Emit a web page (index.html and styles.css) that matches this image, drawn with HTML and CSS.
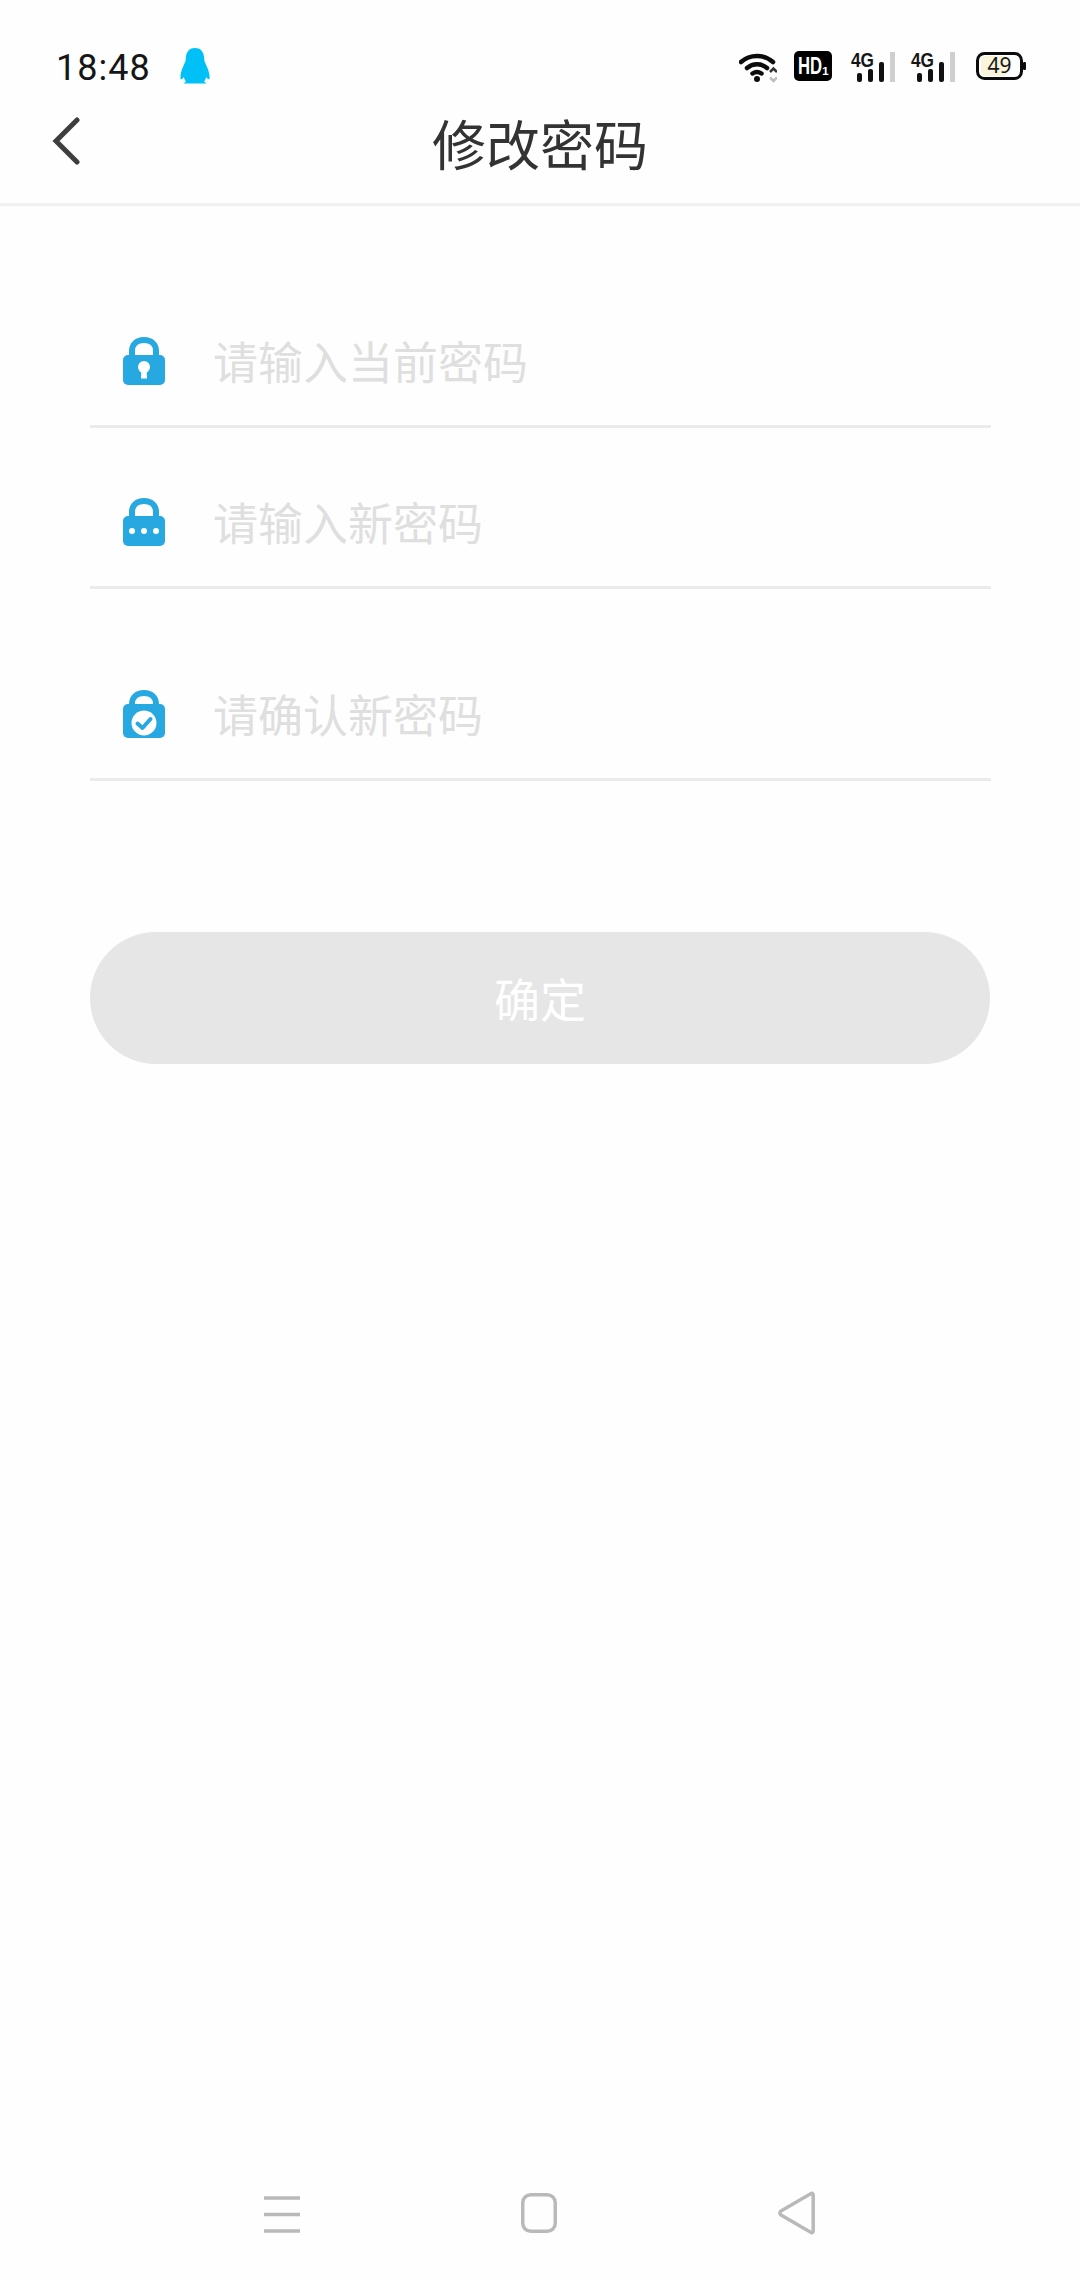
FILE: index.html
```html
<!DOCTYPE html>
<html lang="zh-CN">
<head>
<meta charset="utf-8">
<title>修改密码</title>
<link rel="stylesheet" href="styles.css">
</head>
<body>
<div class="page">
  <header class="status">
    <div class="status-left">
      <span class="time">18:48</span>
      <svg class="qq" viewBox="0 0 30 36"><path d="M15 0C8.500 0 6 5 5.800 10.500C5.700 14 4.500 15 3 19C1.500 22 0 27 0.500 31C2 32 3 30 3.800 29C4.500 31 5 32.500 6 33.500L3.500 35.500H26.500L24 33.500C25 32.500 25.500 31 26.200 29C27 30 28 32 29.500 31C30 27 28.500 22 27 19C25.500 15 24.300 14 24.200 10.500C24 5 21.500 0 15 0Z"/></svg>
    </div>
    <div class="status-right">
      <svg class="wifi" viewBox="0 0 38 32">
        <path class="wifi-arc" d="M2 11C11 3 25 3 34 11"/>
        <path class="wifi-arc" d="M8 17C14 12 22 12 28 17"/>
        <path class="wifi-arc" d="M13.500 22.500C16.500 20.500 19.500 20.500 22.500 22.500"/>
        <circle class="wifi-dot" cx="18" cy="28" r="3"/>
        <path class="wifi-up" d="M31 21L34.500 17.500L38 21"/>
        <path class="wifi-down" d="M31 26.500L34.500 30L38 26.500"/>
      </svg>
      <svg class="hd" viewBox="0 0 38 30">
        <rect class="hd-bg" width="38" height="30" rx="5"/>
        <text class="hd-text" x="4" y="23" textLength="31" lengthAdjust="spacingAndGlyphs">HD₁</text>
      </svg>
      <svg class="sig" viewBox="0 0 45 32">
        <text class="sig-text" x="0" y="16" textLength="23" lengthAdjust="spacingAndGlyphs">4G</text>
        <rect class="bar" x="6" y="22" width="5" height="9" rx="2"/>
        <rect class="bar" x="17" y="18" width="5" height="13" rx="2"/>
        <rect class="bar" x="28" y="11" width="5" height="20" rx="2"/>
        <rect class="bar-off" x="39" y="1" width="5" height="30"/>
      </svg>
      <svg class="sig sig-two" viewBox="0 0 45 32">
        <text class="sig-text" x="0" y="16" textLength="23" lengthAdjust="spacingAndGlyphs">4G</text>
        <rect class="bar" x="6" y="22" width="5" height="9" rx="2"/>
        <rect class="bar" x="17" y="18" width="5" height="13" rx="2"/>
        <rect class="bar" x="28" y="11" width="5" height="20" rx="2"/>
        <rect class="bar-off" x="39" y="1" width="5" height="30"/>
      </svg>
      <svg class="batt" viewBox="0 0 50 28">
        <rect class="batt-fill" x="5" y="4" width="26" height="20" rx="4"/>
        <rect class="batt-body" x="1.500" y="1.500" width="44" height="25" rx="7"/>
        <rect class="batt-cap" x="47" y="10" width="3" height="8" rx="1"/>
        <text class="batt-text" x="23.500" y="21" text-anchor="middle">49</text>
      </svg>
    </div>
  </header>

  <nav class="titlebar">
    <svg class="back" viewBox="0 0 28 48"><path d="M25 3L4 24L25 45"/></svg>
    <h1 class="title">修改密码</h1>
  </nav>

  <form class="form">
    <div class="row">
      <svg class="lock" viewBox="0 0 42 48">
        <path class="shackle" d="M9 22V14C9 7 14 3 21 3C28 3 33 7 33 14V22"/>
        <rect class="lock-body" x="0" y="18" width="42" height="30" rx="5"/>
        <circle class="hole" cx="21" cy="30" r="6"/>
        <path class="hole" d="M18.500 31H23.500L24 41.500H18Z"/>
      </svg>
      <span class="placeholder">请输入当前密码</span>
    </div>
    <div class="row">
      <svg class="lock" viewBox="0 0 42 48">
        <path class="shackle" d="M9 22V14C9 7 14 3 21 3C28 3 33 7 33 14V22"/>
        <rect class="lock-body" x="0" y="18" width="42" height="30" rx="5"/>
        <circle class="hole" cx="9" cy="33" r="3"/>
        <circle class="hole" cx="21" cy="33" r="3"/>
        <circle class="hole" cx="33" cy="33" r="3"/>
      </svg>
      <span class="placeholder">请输入新密码</span>
    </div>
    <div class="row row-gap">
      <svg class="lock" viewBox="0 0 42 48">
        <path class="shackle" d="M9 22V14C9 7 14 3 21 3C28 3 33 7 33 14V22"/>
        <rect class="lock-body" x="0" y="14" width="42" height="34" rx="5"/>
        <circle class="hole" cx="21" cy="33" r="12.500"/>
        <path class="tick" d="M14.500 33.500L19.500 38L27.500 29"/>
      </svg>
      <span class="placeholder">请确认新密码</span>
    </div>
    <button class="submit" type="button">确定</button>
  </form>

  <footer class="navkeys">
    <svg class="key key-menu" viewBox="0 0 36 37">
      <path class="key-line" d="M0 2H36M0 18.500H36M0 35H36"/>
    </svg>
    <svg class="key key-home" viewBox="0 0 36 40">
      <rect class="key-line" x="1.750" y="1.750" width="32.500" height="36.500" rx="8"/>
    </svg>
    <svg class="key key-back" viewBox="0 0 37 44">
      <path class="key-line" d="M33 2.500C34.500 2 35.200 3 35.200 4.500V39.500C35.200 41 34.500 42 33 41.500L3 24C1.500 23 1.500 21 3 20Z"/>
    </svg>
  </footer>
</div>
</body>
</html>
```

FILE: styles.css
```css
* { box-sizing: border-box; }
html, body { margin: 0; padding: 0; background: #fff; }
.page {
  width: 1080px;
  height: 2280px;
  display: flex;
  flex-direction: column;
  background: #fefefe;
  font-family: "Noto Sans CJK SC", "Noto Sans", sans-serif;
}

/* status bar */
.status {
  height: 100px;
  padding: 46px 54px 0 56px;
  display: flex;
  justify-content: space-between;
  align-items: flex-start;
}
.status-left { display: flex; align-items: flex-start; }
.time {
  font-family: Roboto, sans-serif;
  font-size: 36px;
  line-height: 44px;
  letter-spacing: 1px;
  color: #161616;
}
.qq { width: 30px; height: 36px; margin: 2px 0 0 29px; fill: #00c1f7; }
.status-right { display: flex; align-items: flex-start; padding-top: 5px; }
.wifi { width: 38px; height: 32px; margin-right: 17px; fill: none; }
.wifi-arc { stroke: #0c0c0c; stroke-width: 4.500; fill: none; stroke-linecap: round; }
.wifi-dot { fill: #0c0c0c; }
.wifi-up { stroke: #333; stroke-width: 2.500; fill: none; }
.wifi-down { stroke: #bdbdbd; stroke-width: 2.500; fill: none; }
.hd { width: 38px; height: 30px; margin-right: 19px; overflow: visible; }
.hd-bg { fill: #000; }
.hd-text { fill: #fff; font-family: "Liberation Sans", sans-serif; font-weight: 700; font-size: 23px; }
.sig { width: 45px; height: 32px; margin-right: 15px; overflow: visible; }
.sig-two { margin-right: 20px; }
.sig-text { fill: #151515; font-family: "Liberation Sans", sans-serif; font-weight: 700; font-size: 21px; }
.bar { fill: #111; }
.bar-off { fill: #cfcfcf; }
.batt { width: 50px; height: 28px; margin-top: 1px; }
.batt-fill { fill: #faf6dd; }
.batt-body { fill: none; stroke: #0c0c0c; stroke-width: 3; }
.batt-cap { fill: #0c0c0c; }
.batt-text { fill: #1a1a1a; font-family: "Noto Sans", sans-serif; font-size: 21px; }

/* title bar */
.titlebar {
  position: relative;
  height: 106px;
  border-bottom: 3px solid #f1f1f1;
  display: flex;
  align-items: flex-start;
  justify-content: center;
}
.back {
  position: absolute;
  left: 52px;
  top: 17px;
  width: 28px;
  height: 48px;
  fill: none;
  stroke: #3e3e3e;
  stroke-width: 5;
  stroke-linecap: round;
  stroke-linejoin: miter;
}
.title {
  margin: 7px 0 0;
  font-size: 54px;
  line-height: 72px;
  font-weight: 400;
  color: #333;
}

/* form */
.form {
  margin: 96px 89px 0 90px;
  display: flex;
  flex-direction: column;
}
.row {
  height: 126px;
  border-bottom: 3px solid #ebebeb;
  display: flex;
  align-items: center;
  padding-left: 33px;
  margin-bottom: 35px;
}
.row:last-of-type { margin-bottom: 0; }
.row-gap { margin-top: 31px; }
.lock { width: 42px; height: 48px; flex: none; margin-right: 48px; margin-bottom: 6px; }
.shackle { fill: none; stroke: #27a8e0; stroke-width: 6; }
.lock-body { fill: #27a8e0; }
.hole { fill: #fff; }
.tick { fill: none; stroke: #27a8e0; stroke-width: 4; stroke-linecap: round; stroke-linejoin: round; }
.placeholder {
  font-size: 45px;
  line-height: 60px;
  color: #dfdfdf;
  margin-bottom: 5px;
}
.submit {
  margin-top: 151px;
  height: 132px;
  width: 900px;
  border: 0;
  border-radius: 66px;
  background: #e6e6e6;
  color: #fff;
  font-family: inherit;
  font-size: 46px;
  padding: 0 0 2px;
}

/* android keys */
.navkeys {
  margin-top: auto;
  height: 84px;
  display: flex;
  align-items: flex-start;
  padding: 0 265px 0 264px;
  justify-content: space-between;
}
.key { flex: none; }
.key-line { fill: none; stroke: #b9b9b9; stroke-width: 3.500; }
.key-menu { width: 36px; height: 37px; }
.key-home { width: 36px; height: 40px; margin-top: -3px; }
.key-back { width: 37px; height: 44px; margin-top: -5px; }
```
